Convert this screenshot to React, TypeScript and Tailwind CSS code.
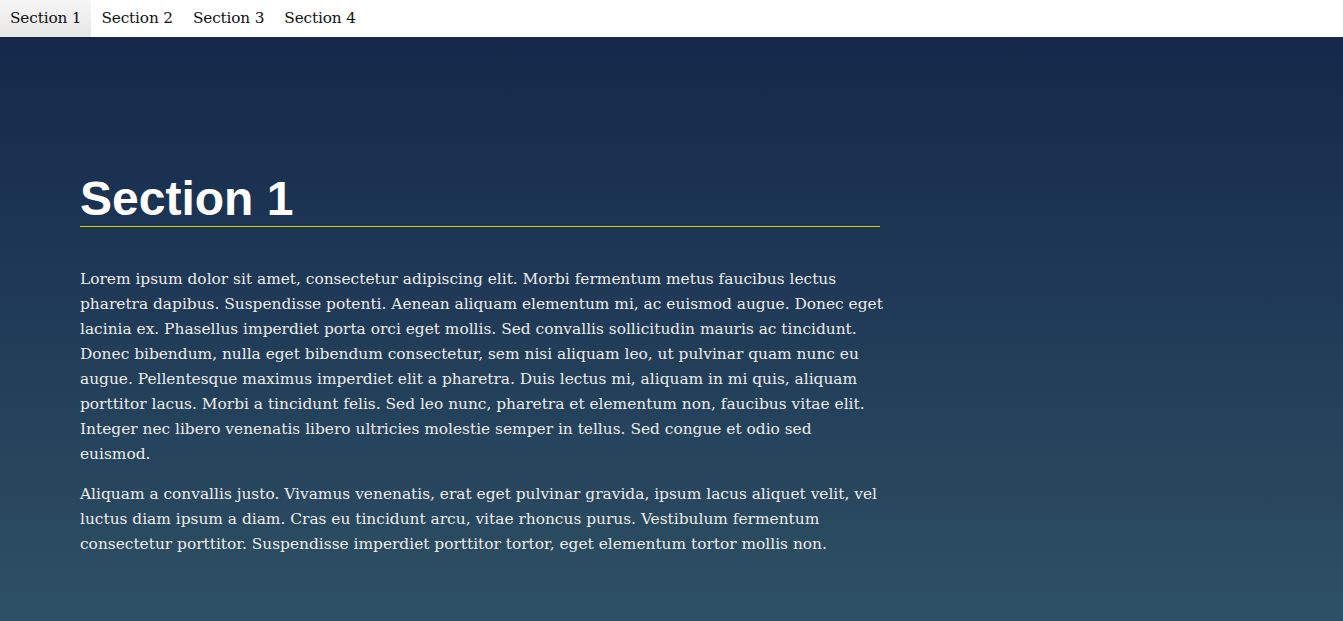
const serif = { fontFamily: '"DejaVu Serif", "Liberation Serif", serif' };

const navItems = ["Section 1", "Section 2", "Section 3", "Section 4"];

const para1 = [
  "Lorem ipsum dolor sit amet, consectetur adipiscing elit. Morbi fermentum metus faucibus lectus",
  "pharetra dapibus. Suspendisse potenti. Aenean aliquam elementum mi, ac euismod augue. Donec eget",
  "lacinia ex. Phasellus imperdiet porta orci eget mollis. Sed convallis sollicitudin mauris ac tincidunt.",
  "Donec bibendum, nulla eget bibendum consectetur, sem nisi aliquam leo, ut pulvinar quam nunc eu",
  "augue. Pellentesque maximus imperdiet elit a pharetra. Duis lectus mi, aliquam in mi quis, aliquam",
  "porttitor lacus. Morbi a tincidunt felis. Sed leo nunc, pharetra et elementum non, faucibus vitae elit.",
  "Integer nec libero venenatis libero ultricies molestie semper in tellus. Sed congue et odio sed",
  "euismod.",
];

const para2 = [
  "Aliquam a convallis justo. Vivamus venenatis, erat eget pulvinar gravida, ipsum lacus aliquet velit, vel",
  "luctus diam ipsum a diam. Cras eu tincidunt arcu, vitae rhoncus purus. Vestibulum fermentum",
  "consectetur porttitor. Suspendisse imperdiet porttitor tortor, eget elementum tortor mollis non.",
];

function Lines({ lines }: { lines: string[] }) {
  return (
    <>
      {lines.map((l, i) => (
        <span key={i} className="block whitespace-nowrap">
          {l}
        </span>
      ))}
    </>
  );
}

export default function App() {
  return (
    <div className="w-full min-h-screen flex flex-col" style={serif}>
      {/* NAV */}
      <nav className="h-[37px] bg-white flex items-stretch shrink-0">
        {navItems.map((label, i) => (
          <a
            key={label}
            href="#"
            className={
              "flex items-center px-[10px] text-[15.3px] tracking-[-0.15px] text-[#111] " +
              (i === 0 ? "bg-gradient-to-b from-[#f6f6f6] to-[#e6e6e6]" : "")
            }
          >
            {label}
          </a>
        ))}
      </nav>

      {/* SECTION */}
      <section className="flex-1 bg-gradient-to-b from-[#15284b] to-[#2e5064] pt-[134px] pb-16 px-20">
        <div className="w-[800px]">
          <h1
            className="text-[48px] leading-[55px] font-bold text-white border-b border-solid border-b-[#d6cf00]"
            style={{ fontFamily: '"Liberation Sans", Arial, sans-serif' }}
          >
            Section 1
          </h1>
          <div className="mt-[40px] text-[15.4px] leading-[25px] text-[#ececec]">
            <p className="mb-[15px]">
              <Lines lines={para1} />
            </p>
            <p>
              <Lines lines={para2} />
            </p>
          </div>
        </div>
      </section>
    </div>
  );
}
